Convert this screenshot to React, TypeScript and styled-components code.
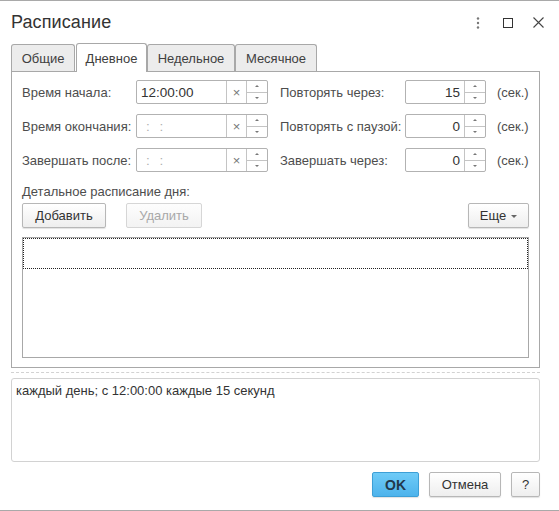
import React from "react";
import styled, { createGlobalStyle, css } from "styled-components";

const Global = createGlobalStyle`
  html, body { margin: 0; padding: 0; background: #fff; }
  body { font-family: "Liberation Sans", Arial, sans-serif; font-size: 13px; color: #4d4d4d; }
  * { box-sizing: border-box; }
`;

const Window = styled.div`
  width: 559px;
  height: 511px;
  border-top: 1px solid #a9a9a9;
  display: flex;
  flex-direction: column;
  padding: 0 20px 0 11px;
  position: relative;
  &::after {
    content: "";
    position: absolute;
    left: 0; right: 0; top: 509px;
    border-top: 1px solid #a9a9a9;
  }
`;

const Header = styled.div`
  height: 42px;
  display: flex;
  align-items: center;
  justify-content: space-between;
  padding-top: 1px;
`;

const Title = styled.div`
  font-size: 18px;
  color: #333;
  letter-spacing: 0.1px;
`;

const HeaderIcons = styled.div`
  display: flex;
  align-items: center;
  margin-right: -10px;
`;

const IconBox = styled.div<{ $w: number }>`
  width: ${(p) => p.$w}px;
  height: 20px;
  display: flex;
  align-items: center;
  justify-content: center;
`;

const TabBar = styled.div`
  display: flex;
  align-items: flex-end;
  height: 28px;
  position: relative;
  z-index: 1;
`;

const Tab = styled.div<{ $w: number; $active?: boolean; $gap?: number }>`
  width: ${(p) => p.$w}px;
  margin-right: ${(p) => p.$gap ?? 0}px;
  height: 27px;
  border: 1px solid #a8a8a8;
  border-bottom: none;
  border-radius: 3px 3px 0 0;
  background: #ececec;
  color: #404040;
  font-size: 13px;
  display: flex;
  align-items: center;
  justify-content: center;
  padding-top: 1px;
  ${(p) =>
    p.$active &&
    css`
      height: 29px;
      background: #fff;
      margin-bottom: -1px;
      padding-bottom: 1px;
    `}
`;

const Panel = styled.div`
  width: 529px;
  height: 297px;
  border: 1px solid #a8a8a8;
  padding: 8px 10px 9px 10px;
  display: flex;
  flex-direction: column;
`;

const Grid = styled.div`
  display: grid;
  grid-template-columns: 114px 132px 137px 81px auto;
  row-gap: 10px;
  align-items: center;
`;

const Label = styled.div<{ $left?: number }>`
  font-size: 13px;
  color: #4d4d4d;
  padding-left: ${(p) => p.$left ?? 0}px;
  white-space: nowrap;
`;

const Unit = styled.div`
  padding-left: 11px;
  color: #4d4d4d;
  white-space: nowrap;
`;

const Field = styled.div`
  height: 24px;
  border: 1px solid #b2b2b2;
  border-radius: 2px;
  display: flex;
  background: #fff;
`;

const FieldText = styled.div<{ $empty?: boolean; $right?: boolean }>`
  flex: 1;
  display: flex;
  align-items: center;
  justify-content: ${(p) => (p.$right ? "flex-end" : "flex-start")};
  padding: ${(p) => (p.$right ? "0 4px 0 0" : p.$empty ? "0 0 0 9px" : "0 0 0 4px")};
  font-size: 13.5px;
  color: ${(p) => (p.$empty ? "#b0b0b0" : "#333")};
  letter-spacing: ${(p) => (p.$empty ? "3px" : "0")};
`;

const ClearBtn = styled.div`
  width: 20px;
  border-left: 1px solid #c4c4c4;
  display: flex;
  align-items: center;
  justify-content: center;
  color: #777;
  font-size: 13px;
`;

const Spinner = styled.div`
  width: 21px;
  border-left: 1px solid #c4c4c4;
  display: flex;
  flex-direction: column;
`;

const SpinHalf = styled.div<{ $top?: boolean }>`
  flex: 1;
  display: flex;
  align-items: center;
  justify-content: center;
  ${(p) => p.$top && css`border-bottom: 1px solid #c4c4c4;`}
`;

const Arrow = styled.div<{ $up?: boolean }>`
  width: 0;
  height: 0;
  border-left: 2px solid transparent;
  border-right: 2px solid transparent;
  ${(p) =>
    p.$up
      ? css`border-bottom: 2px solid #777;`
      : css`border-top: 2px solid #777;`}
`;

const SectionTitle = styled.div`
  margin-top: 12px;
  color: #4d4d4d;
  height: 16px;
`;

const ButtonRow = styled.div`
  display: flex;
  align-items: center;
  margin-top: 3px;
  height: 25px;
`;

const Button = styled.button<{ $w: number; $disabled?: boolean; $gap?: number; $primary?: boolean }>`
  width: ${(p) => p.$w}px;
  height: 25px;
  margin-right: ${(p) => p.$gap ?? 0}px;
  border: 1px solid #b7b7b7;
  border-radius: 2px;
  background: linear-gradient(#ffffff, #eeeeee);
  box-shadow: 0 1px 1px rgba(0, 0, 0, 0.12);
  font-family: "Liberation Sans", Arial, sans-serif;
  font-size: 13px;
  color: ${(p) => (p.$disabled ? "#a8a8a8" : "#333")};
  padding: 0;
  display: flex;
  align-items: center;
  justify-content: center;
  gap: 5px;
  ${(p) =>
    p.$disabled &&
    css`
      border-color: #d6d6d6;
      background: linear-gradient(#fdfdfd, #f3f3f3);
      box-shadow: none;
    `}
  ${(p) =>
    p.$primary &&
    css`
      background: linear-gradient(#6fcbf7, #4db3ec);
      border-color: #3d9fd6;
      font-weight: bold;
      color: #22384b;
      font-size: 14px;
    `}
`;

const Spacer = styled.div`
  flex: 1;
`;

const Caret = styled.div`
  width: 0;
  height: 0;
  border-left: 3px solid transparent;
  border-right: 3px solid transparent;
  border-top: 3px solid #666;
  margin-top: 1px;
`;

const Table = styled.div`
  margin-top: 9px;
  height: 121px;
  border: 1px solid #a8a8a8;
`;

const TableRow = styled.div`
  height: 31px;
  border: 1px dotted #222;
`;

const Separator = styled.div`
  margin-top: 4px;
  width: 529px;
  border-top: 1px dashed #d2d2d2;
`;

const TextArea = styled.div`
  margin-top: 5px;
  width: 529px;
  height: 84px;
  border: 1px solid #d2d2d2;
  border-radius: 3px;
  padding: 4px 4px;
  color: #333;
  font-size: 13px;
`;

const Footer = styled.div`
  margin-top: 10px;
  display: flex;
  justify-content: flex-end;
  width: 529px;
`;

const TimeField = ({ value }: { value?: string }) => (
  <Field>
    <FieldText $empty={!value}>{value ?? ": :"}</FieldText>
    <ClearBtn>×</ClearBtn>
    <Spinner>
      <SpinHalf $top>
        <Arrow $up />
      </SpinHalf>
      <SpinHalf>
        <Arrow />
      </SpinHalf>
    </Spinner>
  </Field>
);

const NumField = ({ value }: { value: string }) => (
  <Field>
    <FieldText $right>{value}</FieldText>
    <Spinner>
      <SpinHalf $top>
        <Arrow $up />
      </SpinHalf>
      <SpinHalf>
        <Arrow />
      </SpinHalf>
    </Spinner>
  </Field>
);

export default function App() {
  return (
    <>
      <Global />
      <Window>
        <Header>
          <Title>Расписание</Title>
          <HeaderIcons>
            <IconBox $w={22}>
              <svg width="4" height="12" viewBox="0 0 4 12">
                <circle cx="2" cy="1.5" r="1.2" fill="#777" />
                <circle cx="2" cy="6" r="1.2" fill="#777" />
                <circle cx="2" cy="10.5" r="1.2" fill="#777" />
              </svg>
            </IconBox>
            <IconBox $w={38}>
              <svg width="10" height="10" viewBox="0 0 10 10">
                <rect x="0.5" y="0.5" width="9" height="9" fill="none" stroke="#333" strokeWidth="1" />
              </svg>
            </IconBox>
            <IconBox $w={22}>
              <svg width="11" height="11" viewBox="0 0 11 11">
                <path d="M0.5 0.5 L10.5 10.5 M10.5 0.5 L0.5 10.5" stroke="#444" strokeWidth="1.1" />
              </svg>
            </IconBox>
          </HeaderIcons>
        </Header>
        <TabBar>
          <Tab $w={64} $gap={1}>Общие</Tab>
          <Tab $w={71} $active>Дневное</Tab>
          <Tab $w={88}>Недельное</Tab>
          <Tab $w={82}>Месячное</Tab>
        </TabBar>
        <Panel>
          <Grid>
            <Label>Время начала:</Label>
            <TimeField value="12:00:00" />
            <Label $left={12}>Повторять через:</Label>
            <NumField value="15" />
            <Unit>(сек.)</Unit>

            <Label>Время окончания:</Label>
            <TimeField />
            <Label $left={12}>Повторять с паузой:</Label>
            <NumField value="0" />
            <Unit>(сек.)</Unit>

            <Label>Завершать после:</Label>
            <TimeField />
            <Label $left={12}>Завершать через:</Label>
            <NumField value="0" />
            <Unit>(сек.)</Unit>
          </Grid>
          <SectionTitle>Детальное расписание дня:</SectionTitle>
          <ButtonRow>
            <Button $w={84} $gap={20}>Добавить</Button>
            <Button $w={76} $disabled>Удалить</Button>
            <Spacer />
            <Button $w={61}>
              Еще <Caret />
            </Button>
          </ButtonRow>
          <Table>
            <TableRow />
          </Table>
        </Panel>
        <Separator />
        <TextArea>каждый день; с 12:00:00 каждые 15 секунд</TextArea>
        <Footer>
          <Button $w={47} $gap={10} $primary>OK</Button>
          <Button $w={72} $gap={10}>Отмена</Button>
          <Button $w={29}>?</Button>
        </Footer>
      </Window>
    </>
  );
}
